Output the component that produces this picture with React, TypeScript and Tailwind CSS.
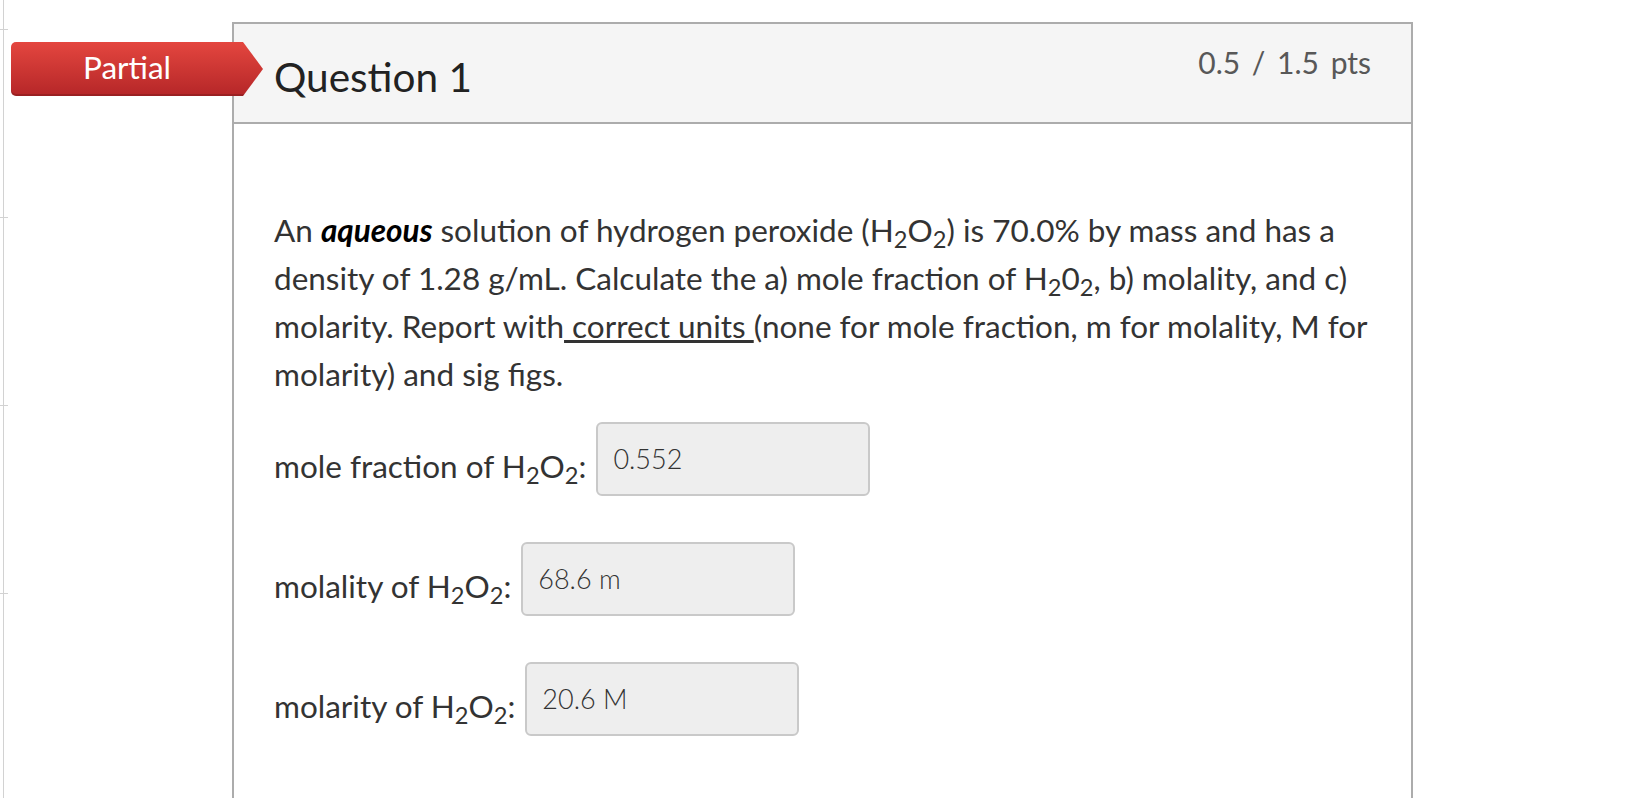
import React from 'react'

const H2O2 = ({ zero = false }: { zero?: boolean }) => (
  <span>
    H<sub>2</sub>
    {zero ? '0' : 'O'}
    <sub>2</sub>
  </span>
)

const answers = [
  { label: 'mole fraction of', value: '0.552' },
  { label: 'molality of', value: '68.6 m' },
  { label: 'molarity of', value: '20.6 M' },
]

const App = () => {
  return (
    <div className="relative flex min-h-screen bg-white font-['Lato','Open_Sans',sans-serif] text-[#333]">
      {/* left rail with ticks */}
      <div className="w-[8px] shrink-0 flex flex-col bg-[linear-gradient(to_right,transparent_3px,#d2d2d2_3px,#d2d2d2_4px,transparent_4px)]">
        <div className="h-[29px]" />
        {[0, 1, 2, 3].map((i) => (
          <div key={i} className="h-[188px] border-t border-[#d2d2d2]" />
        ))}
      </div>

      {/* Partial badge */}
      <div className="absolute left-[11px] top-[42px] w-[252px] h-[54px] rounded-l-[5px] bg-gradient-to-b from-[#e4463f] to-[#b52628] shadow-[inset_0_-2px_0_rgba(0,0,0,0.15)] [clip-path:polygon(0_0,calc(100%_-_20px)_0,100%_50%,calc(100%_-_20px)_100%,0_100%)]">
        <div className="w-[232px] h-full flex items-center justify-center pb-[2px] text-white text-[31.5px] leading-none">
          Partial
        </div>
      </div>

      <div className="flex-1 pl-[224px] pt-[22px]">
        <div className="w-[1181px] border-2 border-[#acacac] bg-white">
          {/* header */}
          <div className="h-[100px] flex justify-between items-start bg-[#f5f5f5] border-b-2 border-[#acacac] pl-[40px] pr-[40px]">
            <div className="pt-[29px] text-[40.5px] leading-[1.2] text-[#222]">Question 1</div>
            <div className="pt-[20px] text-[30px] leading-[1.2] text-[#585858] [word-spacing:4px]">0.5 / 1.5 pts</div>
          </div>

          {/* body */}
          <div className="pl-[40px] pr-[30px] pt-[82px] pb-[200px]">
            <p className="text-[31.5px] leading-[48px]">
              An <b className="font-bold italic text-black">aqueous</b> solution of hydrogen peroxide (<H2O2 />) is 70.0% by mass and has a density of 1.28 g/mL. Calculate the a) mole fraction of <H2O2 zero />, b) molality, and c) molarity. Report with<u> correct units </u>(none for mole fraction, m for molality, M for molarity) and sig figs.
            </p>

            <div className="mt-[24px] flex flex-col gap-[46px]">
              {answers.map((a) => (
                <div key={a.label} className="flex items-center">
                  <span className="pt-[14px] text-[31.5px] leading-[48px]">
                    {a.label} <H2O2 />:
                  </span>
                  <input
                    readOnly
                    value={a.value}
                    className="ml-[10px] w-[274px] h-[74px] border-2 border-[#c9c9c9] rounded-[6px] bg-[#eeeeee] px-[15px] pb-[2px] text-[27px] font-light text-[#333] font-['Lato',sans-serif] outline-none"
                  />
                </div>
              ))}
            </div>
          </div>
        </div>
      </div>
    </div>
  )
}

export default App
